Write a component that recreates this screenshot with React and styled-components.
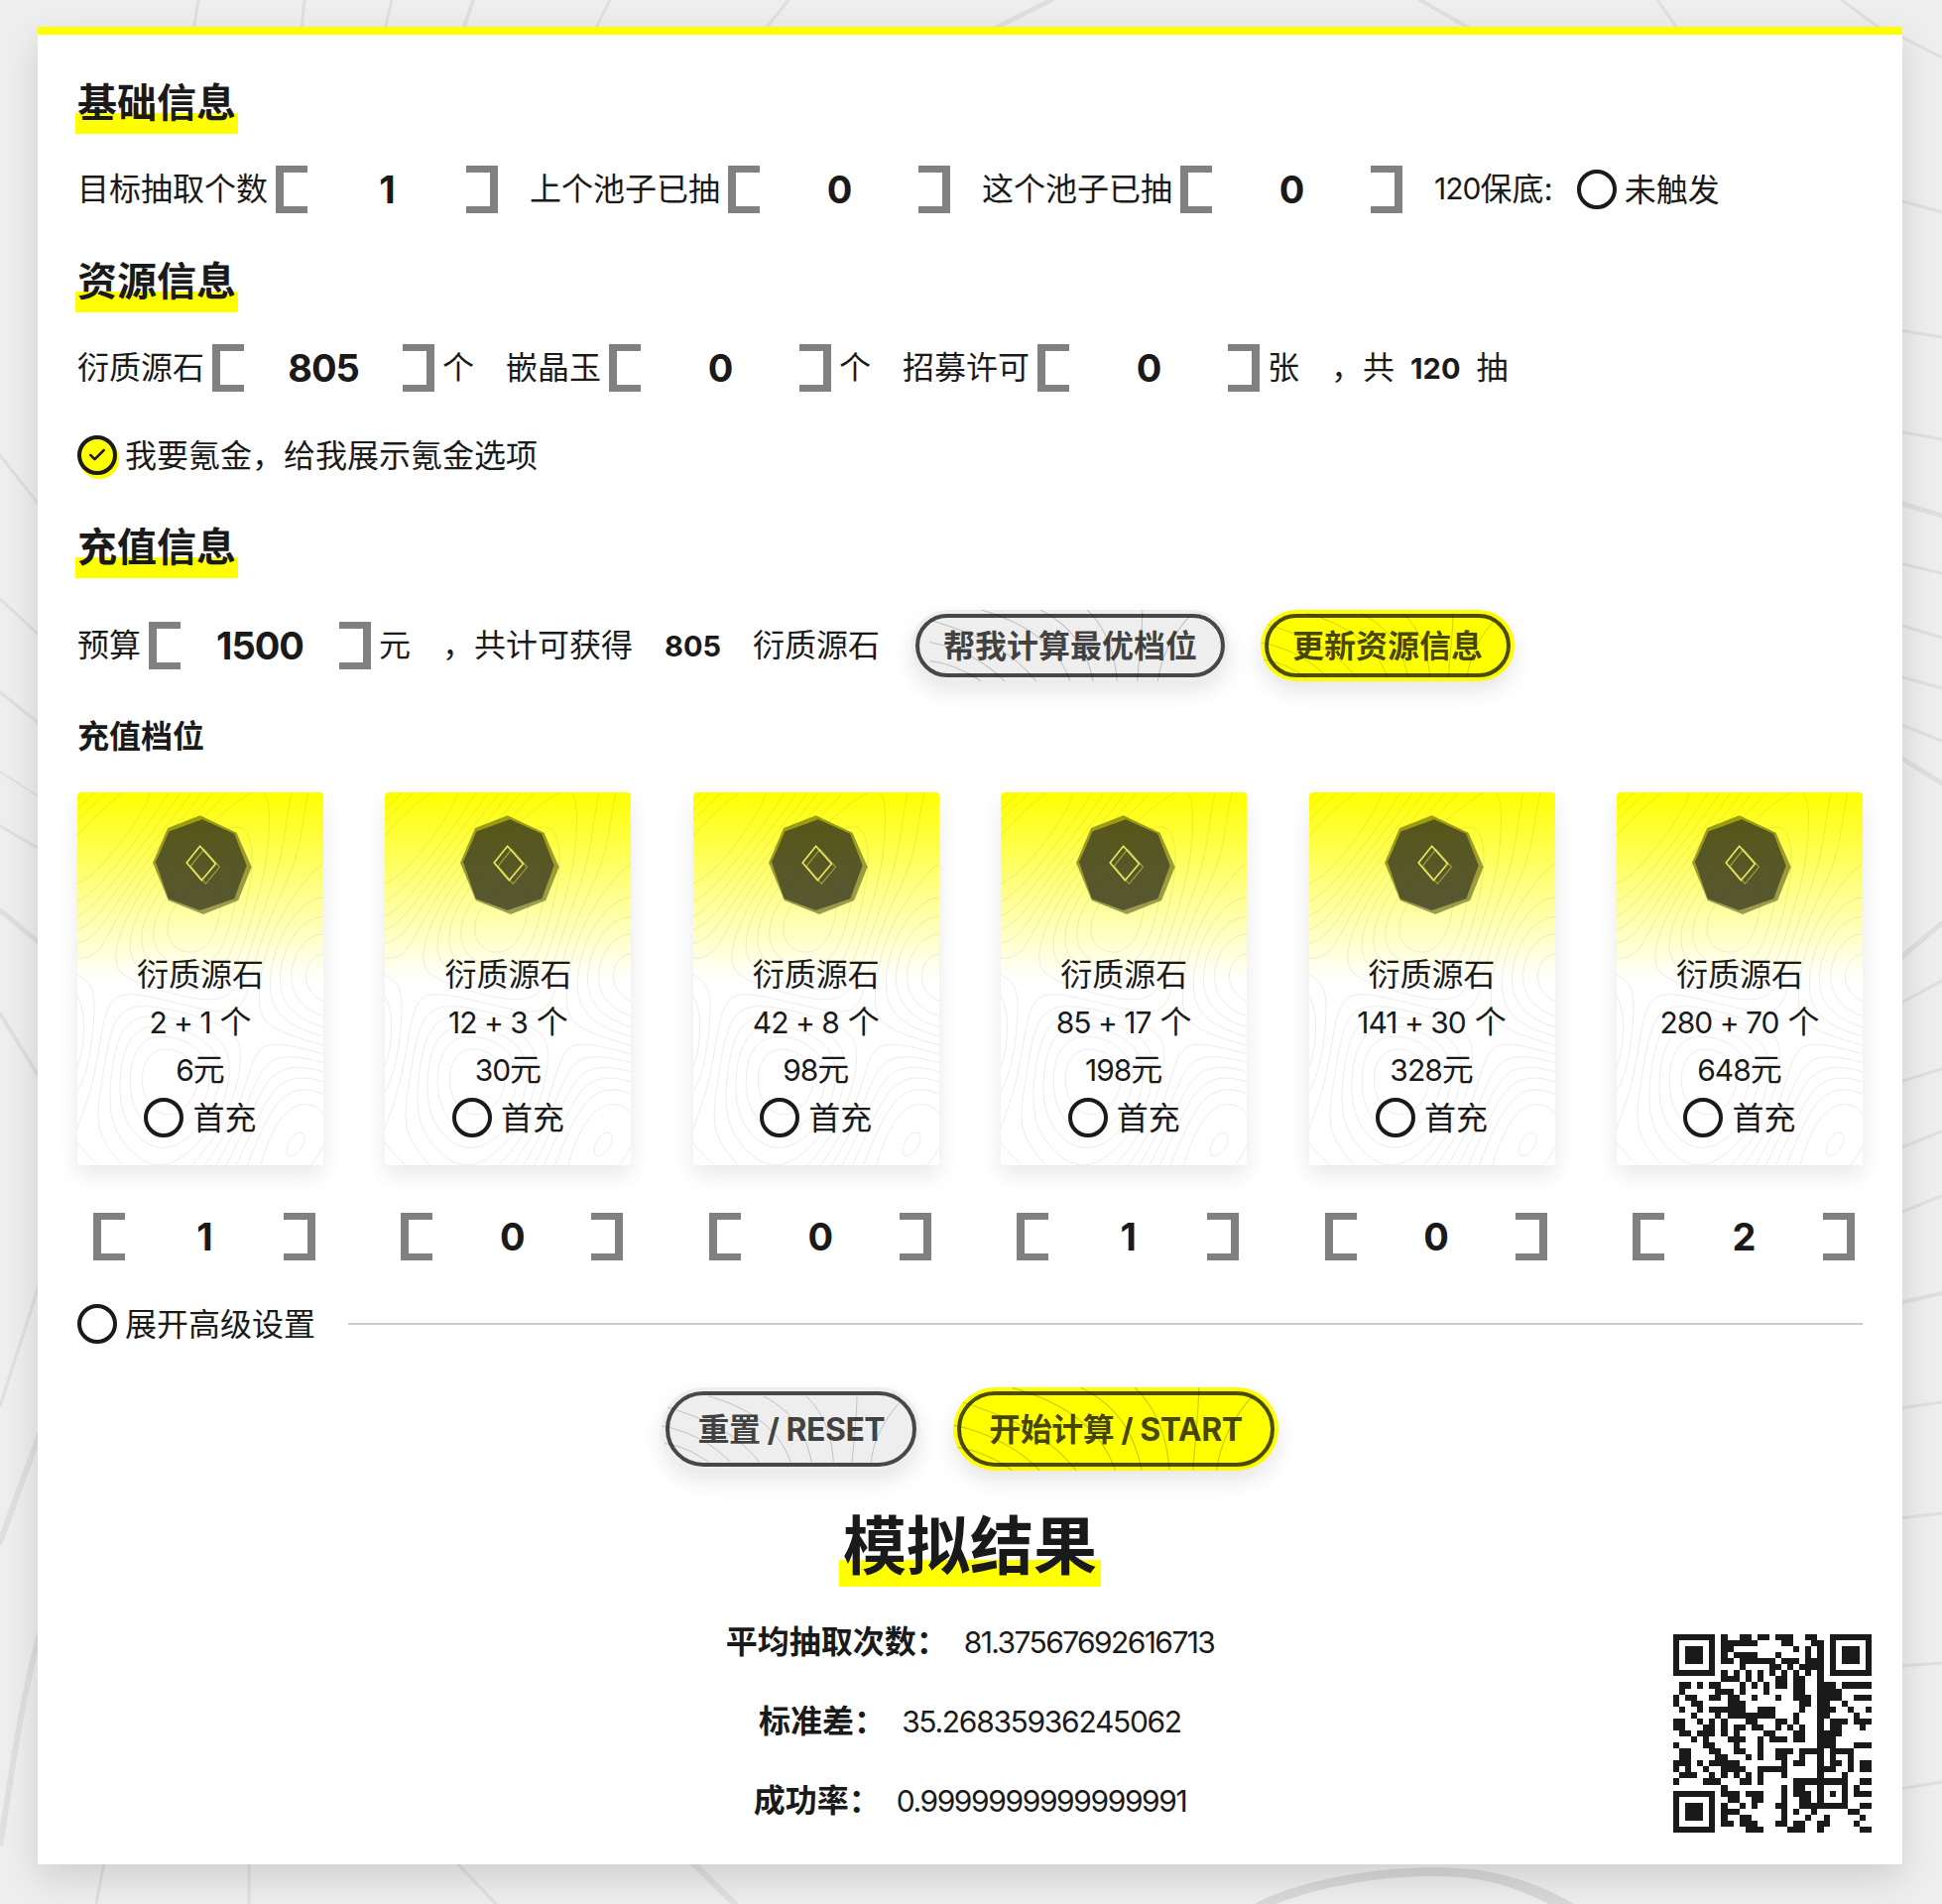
import React from "react";
import styled, { createGlobalStyle } from "styled-components";
import { Check } from "lucide-react";

const svgUrl = (w, h, body) =>
  `url("data:image/svg+xml,${encodeURIComponent(
    `<svg xmlns='http://www.w3.org/2000/svg' width='${w}' height='${h}' viewBox='0 0 ${w} ${h}' fill='none'>${body}</svg>`
  )}")`;

// lines of the page backdrop that show around the sheet: x1 y1 x2 y2 width
const pageLines = [
  [200, 0, 195, 30, 3], [307, 0, 304, 30, 3], [395, 0, 388, 30, 3], [477, 0, 467, 30, 4],
  [615, 0, 600, 30, 3], [795, 0, 771, 30, 3], [1060, 0, 1000, 30, 5], [1432, 0, 1484, 30, 4],
  [1671, 0, 1692, 30, 3], [1857, 0, 1897, 30, 3],
  [0, 459, 40, 510, 3], [0, 604, 40, 641, 3], [0, 698, 40, 730, 3], [0, 778, 40, 804, 2],
  [0, 833, 40, 856, 3], [0, 918, 40, 951, 5], [0, 1022, 40, 1087, 4], [0, 1418, 40, 1294, 3],
  [0, 1555, 40, 1446, 6],
  [1915, 36, 1958, 58, 3], [1915, 202, 1958, 214, 3], [1915, 333, 1958, 340, 3], [1915, 435, 1958, 443, 3],
  [1915, 507, 1958, 520, 5], [1915, 568, 1958, 578, 3], [1915, 630, 1958, 643, 3], [1915, 682, 1958, 694, 3],
  [1915, 730, 1958, 747, 3], [1915, 763, 1958, 790, 5], [1915, 967, 1958, 931, 5], [1915, 1012, 1958, 989, 3],
  [1915, 1091, 1958, 1078, 3], [1915, 1158, 1958, 1141, 3], [1915, 1223, 1958, 1206, 3], [1915, 1314, 1958, 1304, 4],
  [1915, 1420, 1958, 1414, 3], [1915, 1531, 1958, 1526, 3], [1915, 1680, 1958, 1677, 3], [1915, 1804, 1958, 1797, 3],
  [105, 1878, 97, 1920, 3], [251, 1878, 251, 1920, 3], [460, 1878, 500, 1920, 3], [698, 1878, 741, 1920, 6],
];

const pageBackdrop = svgUrl(
  1958,
  1920,
  `<g stroke='#dfdfdf' stroke-linecap='round'>` +
    pageLines
      .map(([a, b, c, d, w]) => `<line x1='${a}' y1='${b}' x2='${c}' y2='${d}' stroke-width='${w}'/>`)
      .join("") +
    `</g>` +
    `<path d='M0 1861 C10 1800 20 1720 40 1647' stroke='#dfdfdf' stroke-width='6'/>` +
    `<path d='M1265 1920 C1310 1895 1390 1883 1446 1883 C1500 1883 1545 1895 1587 1920 L1562 1920 C1525 1902 1495 1892 1446 1892 C1395 1892 1330 1902 1287 1920 Z' fill='#d8d8d8'/>`
);

// fine contour lines printed on the prize cards, traced from a smooth height field
const cardHeight = (x, y) =>
  3 * Math.sin(x / 36 + 1.4 * Math.sin(y / 74)) +
  2.2 * Math.sin(y / 42 + x / 85) +
  1.5 * Math.sin((x + y) / 58 + 1);

const cardContours = (() => {
  const step = 4;
  const gap = 1.1;
  let d = "";
  const cross = (a, b, level) => (level - a) / (b - a);
  for (let level = -6.6; level < 6.6; level += gap) {
    for (let y = 0; y < 376; y += step) {
      for (let x = 0; x < 248; x += step) {
        const tl = cardHeight(x, y);
        const tr = cardHeight(x + step, y);
        const br = cardHeight(x + step, y + step);
        const bl = cardHeight(x, y + step);
        const pts = [];
        if (tl < level !== tr < level) pts.push([x + step * cross(tl, tr, level), y]);
        if (tr < level !== br < level) pts.push([x + step, y + step * cross(tr, br, level)]);
        if (bl < level !== br < level) pts.push([x + step * cross(bl, br, level), y + step]);
        if (tl < level !== bl < level) pts.push([x, y + step * cross(tl, bl, level)]);
        if (pts.length >= 2) {
          d += `M${pts[0][0].toFixed(1)} ${pts[0][1].toFixed(1)}L${pts[1][0].toFixed(1)} ${pts[1][1].toFixed(1)}`;
        }
      }
    }
  }
  return svgUrl(248, 376, `<path d='${d}' stroke='#000' stroke-opacity='.1' stroke-width='.8'/>`);
})();

// the heavier contour lines that fall through the pill buttons
const buttonContours = svgUrl(
  330,
  84,
  `<g stroke='#000' stroke-opacity='.2' stroke-width='1.2'>` +
    `<path d='M0 12 C40 24 90 40 125 84'/><path d='M0 38 C30 44 60 56 88 84'/><path d='M0 60 C20 62 40 70 60 84'/>` +
    `<path d='M60 0 C110 14 150 40 165 84'/><path d='M130 0 C170 20 185 50 192 84'/><path d='M185 0 C210 24 218 54 220 84'/>` +
    `<path d='M250 0 C250 24 246 54 244 84'/><path d='M305 8 C285 30 272 54 268 84'/>` +
    `</g>`
);

const qrRows = [
  "#######.#..##.##.###..##..#######",
  "#.....#.######....##...##.#.....#",
  "#.###.#.##..........#.#.#.#.###.#",
  "#.###.#.#.####...#....#.#.#.###.#",
  "#.###.#.##.######.###.###.#.###.#",
  "#.....#....#....##.#.####.#.....#",
  "#######.#.#.#.#.#.#.#.#.#.#######",
  "........###.#.#..##.##..#........",
  ".##.#.##...#.#.#.##.##..###.#####",
  ".#.....###.#...#....##..####.....",
  "#.##..##.##..#...#..###.####..###",
  "#..##....###.........##.##..#....",
  ".#..#.######..###....#..###..#..#",
  "...#...#.########...#...##....#..",
  "##..#.#.#...##...##.#...#.###.###",
  "##...##.#.##.##..#.#.#..#.##...#.",
  ".##.###.#.#....##...##..####.....",
  "...#.#...###..#.###.##..###......",
  "#....##...#...#.........###...###",
  ".##...##..##..#..###.####.####...",
  ".##....##...#.#..##..#..#.#..#...",
  "###.#.#####.......#.##..#.##.#.##",
  "#.#..#..####..#####.....###..#.##",
  ".###..#.#.#.#.#...#.....#...#....",
  "#....###...##.#.....#########..##",
  "........#.........#.##..#...#.#..",
  "#######.###.###...#.###.#.#.#.###",
  "#.....#..##..##...#..##.#...#....",
  "#.###.#.#..#.#...##..########..##",
  "#.###.#.###.......#.#..#.....##..",
  "#.###.#.#..##.....#...#..#.....#.",
  "#.....#.##.###...##.##..##....#..",
  "#######.....###....###..#......##",
];

const qrPath = qrRows
  .flatMap((row, y) =>
    [...row].map((cell, x) => (cell === "#" ? `M${x} ${y}h1v1h-1z` : ""))
  )
  .join("");

const Global = createGlobalStyle`
  html, body {
    margin: 0;
    padding: 0;
  }
  body {
    min-height: 1920px;
    background: #eeeeee ${pageBackdrop} no-repeat 0 0;
    color: #1a1a1a;
    font-family: Inter, "Noto Sans CJK SC", sans-serif;
    font-size: 32px;
  }
`;

const Page = styled.div`
  padding: 27px 40px 0 38px;
`;

const Sheet = styled.main`
  box-sizing: border-box;
  height: 1853px;
  padding: 44px 40px 0;
  background: #fff;
  border-top: 8px solid #ffff00;
  box-shadow: 0 14px 34px rgba(0, 0, 0, 0.13);
`;

const Heading = styled.h2`
  width: fit-content;
  margin: ${(p) => p.$top || 0}px 0 0 -2px;
  padding: 0 2px 6px;
  font-size: 40px;
  font-weight: 700;
  line-height: 50px;
  background: linear-gradient(transparent 35px, #ffff00 35px);
`;

const SubHeading = styled.h3`
  margin: 32px 0 0;
  font-size: 32px;
  font-weight: 700;
  line-height: 47px;
  padding-bottom: 1px;
`;

const Row = styled.div`
  display: flex;
  align-items: center;
  gap: ${(p) => p.$gap ?? 32}px;
  margin-top: ${(p) => p.$top ?? 32}px;
  min-height: 48px;
`;

const Field = styled.div`
  display: flex;
  align-items: center;
  gap: ${(p) => p.$gap ?? 8}px;
`;

const Text = styled.span`
  display: inline-flex;
  align-items: center;
  line-height: 47px;
  padding-bottom: 1px;
  white-space: nowrap;
`;

const Num = styled.span`
  font-size: 30px;
  letter-spacing: ${(p) => p.$spacing ?? -1}px;
`;

const BoldNum = styled.span`
  font-size: 29px;
  font-weight: 700;
`;

const Stepper = styled.div`
  display: flex;
  align-items: center;
  flex: none;
  width: 224px;
  height: 48px;
`;

const Bracket = styled.span`
  box-sizing: border-box;
  flex: none;
  width: 32px;
  height: 48px;
  border: 8px solid #808080;
  border-top-width: 7px;
  border-bottom-width: 7px;
  border-${(p) => p.$side}: none;
`;

const StepValue = styled.span`
  flex: 1;
  text-align: center;
  font-size: 38px;
  font-weight: 700;
  letter-spacing: -1px;
  line-height: 48px;
`;

const Radio = styled.span`
  box-sizing: border-box;
  display: inline-flex;
  align-items: center;
  justify-content: center;
  flex: none;
  width: 40px;
  height: 40px;
  margin-left: ${(p) => p.$indent ?? 0}px;
  border: 4px solid #1a1a1a;
  border-radius: 50%;
  background: ${(p) => (p.$checked ? "#ffff00" : "transparent")};
  box-shadow: ${(p) => (p.$checked ? "2px 4px 0 #ffff00" : "none")};
`;

const Option = styled.div`
  display: flex;
  align-items: center;
  gap: ${(p) => p.$gap ?? 8}px;
  min-height: 48px;
  line-height: 47px;
  white-space: nowrap;
`;

const Pill = styled.button`
  flex: none;
  height: ${(p) => (p.$large ? 84 : 72)}px;
  padding: 0 ${(p) => (p.$large ? 36 : 32)}px 4px;
  border: none;
  border-radius: 42px;
  font-family: inherit;
  font-size: 32px;
  font-weight: 700;
  letter-spacing: ${(p) => (p.$large ? -0.5 : 0)}px;
  color: rgba(0, 0, 0, 0.72);
  background: ${(p) => (p.$primary ? "#ffff00" : "#eeeeee")} ${buttonContours} center / 100% 100% no-repeat;
  outline: 4px solid rgba(0, 0, 0, 0.7);
  outline-offset: -8px;
  box-shadow: 0 10px 22px rgba(0, 0, 0, 0.1);
`;

const CardGrid = styled.div`
  display: grid;
  grid-template-columns: repeat(6, 248px);
  justify-content: space-between;
  margin-top: 32px;
`;

const CardColumn = styled.div`
  display: flex;
  flex-direction: column;
  align-items: center;
`;

const PackCard = styled.div`
  box-sizing: border-box;
  display: flex;
  flex-direction: column;
  align-items: center;
  width: 248px;
  height: 376px;
  padding-top: 22px;
  border-radius: 4px;
  background: ${cardContours} no-repeat 0 0, linear-gradient(#ffff00, #ffffff 50%);
  box-shadow: 0 10px 22px rgba(0, 0, 0, 0.09);
  font-size: 32px;
`;

const PackLine = styled.div`
  line-height: 48px;
  white-space: nowrap;
`;

const PackIconWrap = styled.div`
  width: 102px;
  height: 102px;
  margin: 0 0 36px 4px;
`;

const CardStepper = styled(Stepper)`
  margin: 48px 0 0 8px;
`;

const AdvancedRow = styled(Row)`
  margin-top: 40px;
`;

const Rule = styled.div`
  flex: 1;
  height: 2px;
  margin-left: 1px;
  background: #cccccc;
`;

const Actions = styled.div`
  display: flex;
  justify-content: center;
  gap: 33px;
  margin-top: 40px;
`;

const ResultTitle = styled.h1`
  width: fit-content;
  margin: 27px auto 0;
  padding: 8px 4px 0;
  font-size: 64px;
  font-weight: 700;
  line-height: 82px;
  background: linear-gradient(transparent 63px, #ffff00 63px);
`;

const ResultGrid = styled.div`
  display: grid;
  grid-template-columns: 1fr auto 1fr;
  margin-top: 32px;
`;

const StatList = styled.div`
  grid-column: 2;
  display: flex;
  flex-direction: column;
  gap: 32px;
`;

const Stat = styled.div`
  display: flex;
  justify-content: center;
  gap: 16px;
  line-height: 48px;
  white-space: nowrap;
`;

const StatLabel = styled.span`
  font-weight: 700;
`;

const QrCode = styled.svg`
  grid-column: 3;
  justify-self: end;
  width: 200px;
  height: 200px;
  margin: 16px -9px 0 0;
`;

const Input = ({ value }) => (
  <Stepper>
    <Bracket $side="right" />
    <StepValue>{value}</StepValue>
    <Bracket $side="left" />
  </Stepper>
);

const PackIcon = () => (
  <svg viewBox="70 36 304 304" width="102" height="102">
    <polygon
      points="215,40 325,92 370,195 330,295 225,337 120,295 73,182 118,78"
      fill="#3a3a00"
      opacity="0.5"
    />
    <polygon
      points="222,52 318,95 355,190 318,290 215,325 120,290 82,180 122,88"
      fill="#2a2a20"
      opacity="0.6"
    />
    <polygon
      points="227,142 274,195 232,245 187,192"
      stroke="#e6e65a"
      strokeOpacity="0.45"
      strokeWidth="4"
      fill="none"
    />
    <polygon
      points="215,132 262,185 220,235 175,182"
      stroke="#e8e85a"
      strokeWidth="5"
      fill="none"
    />
  </svg>
);

const packs = [
  { amount: "2 + 1", price: "6", count: 1 },
  { amount: "12 + 3", price: "30", count: 0 },
  { amount: "42 + 8", price: "98", count: 0 },
  { amount: "85 + 17", price: "198", count: 1 },
  { amount: "141 + 30", price: "328", count: 0 },
  { amount: "280 + 70", price: "648", count: 2 },
];

const stats = [
  { label: "平均抽取次数：", value: "81.37567692616713", spacing: -1.6 },
  { label: "标准差：", value: "35.26835936245062", spacing: -1.3 },
  { label: "成功率：", value: "0.9999999999999991", spacing: -1.4 },
];

const App = () => (
  <Page>
    <Global />
    <Sheet>
      <Heading>基础信息</Heading>
      <Row>
        <Field>
          <Text>目标抽取个数</Text>
          <Input value="1" />
        </Field>
        <Field>
          <Text>上个池子已抽</Text>
          <Input value="0" />
        </Field>
        <Field>
          <Text>这个池子已抽</Text>
          <Input value="0" />
        </Field>
        <Option>
          <Text>
            <Num>120</Num>保底:
          </Text>
          <Radio $indent={16} />
          未触发
        </Option>
      </Row>

      <Heading $top={44}>资源信息</Heading>
      <Row>
        <Field>
          <Text>衍质源石</Text>
          <Input value="805" />
          <Text>个</Text>
        </Field>
        <Field>
          <Text>嵌晶玉</Text>
          <Input value="0" />
          <Text>个</Text>
        </Field>
        <Field>
          <Text>招募许可</Text>
          <Input value="0" />
          <Text>张</Text>
        </Field>
        <Field $gap={16}>
          <Text>，共</Text>
          <BoldNum>120</BoldNum>
          <Text>抽</Text>
        </Field>
      </Row>
      <Row $top={40}>
        <Option>
          <Radio $checked>
            <Check size={20} strokeWidth={3} color="#1a1a1a" />
          </Radio>
          我要氪金，给我展示氪金选项
        </Option>
      </Row>

      <Heading $top={44}>充值信息</Heading>
      <Row $top={32} $gap={32}>
        <Field>
          <Text>预算</Text>
          <Input value="1500" />
          <Text>元</Text>
        </Field>
        <Text>，共计可获得</Text>
        <BoldNum>805</BoldNum>
        <Text>衍质源石</Text>
        <Pill>帮我计算最优档位</Pill>
        <Pill $primary>更新资源信息</Pill>
      </Row>

      <SubHeading>充值档位</SubHeading>
      <CardGrid>
        {packs.map((pack) => (
          <CardColumn key={pack.amount}>
            <PackCard>
              <PackIconWrap>
                <PackIcon />
              </PackIconWrap>
              <PackLine>衍质源石</PackLine>
              <PackLine>
                <Num>{pack.amount}</Num> 个
              </PackLine>
              <PackLine>
                <Num>{pack.price}</Num>元
              </PackLine>
              <Option $gap={9}>
                <Radio />
                首充
              </Option>
            </PackCard>
            <CardStepper>
              <Bracket $side="right" />
              <StepValue>{pack.count}</StepValue>
              <Bracket $side="left" />
            </CardStepper>
          </CardColumn>
        ))}
      </CardGrid>

      <AdvancedRow>
        <Option>
          <Radio />
          展开高级设置
        </Option>
        <Rule />
      </AdvancedRow>

      <Actions>
        <Pill $large>重置 / RESET</Pill>
        <Pill $large $primary>
          开始计算 / START
        </Pill>
      </Actions>

      <ResultTitle>模拟结果</ResultTitle>
      <ResultGrid>
        <StatList>
          {stats.map((stat) => (
            <Stat key={stat.label}>
              <StatLabel>{stat.label}</StatLabel>
              <Num $spacing={stat.spacing}>{stat.value}</Num>
            </Stat>
          ))}
        </StatList>
        <QrCode viewBox="0 0 33 33" shapeRendering="crispEdges">
          <path d={qrPath} fill="#1a1a1a" />
        </QrCode>
      </ResultGrid>
    </Sheet>
  </Page>
);

export default App;
